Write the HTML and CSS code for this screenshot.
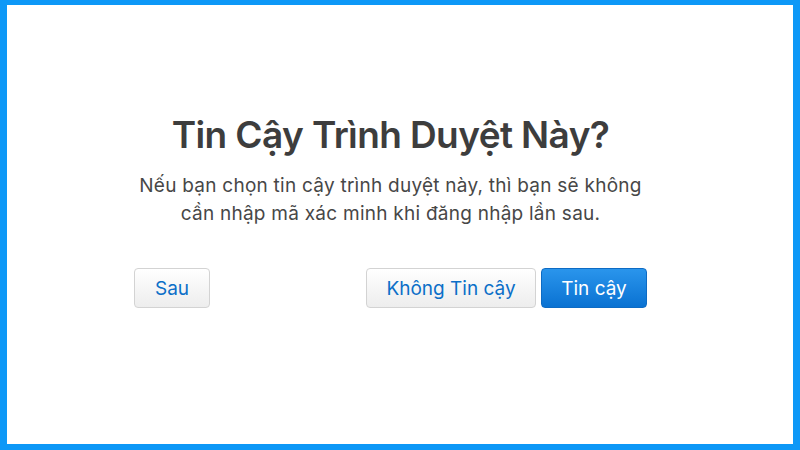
FILE: index.html
```html
<!DOCTYPE html>
<html lang="vi">
<head>
<meta charset="utf-8">
<link rel="stylesheet" href="styles.css">
</head>
<body>
<div class="frame">
  <div class="dialog">
    <h1 class="title">Tin Cậy Trình Duyệt Này?</h1>
    <p class="desc">Nếu bạn chọn tin cậy trình duyệt này, thì bạn sẽ không<br>cần nhập mã xác minh khi đăng nhập lần sau.</p>
    <div class="actions">
      <button class="btn btn-later">Sau</button>
      <div class="right">
        <button class="btn btn-no">Không Tin cậy</button>
        <button class="btn btn-primary">Tin cậy</button>
      </div>
    </div>
  </div>
</div>
</body>
</html>
```
FILE: styles.css
```css
html, body {
  margin: 0;
  padding: 0;
  background: #fff;
}
.frame {
  box-sizing: border-box;
  width: 800px;
  height: 450px;
  border-style: solid;
  border-color: #0d98f7;
  border-width: 5px 7px 6px 7px;
  background: #fff;
  font-family: Inter, "Noto Sans", sans-serif;
}
.dialog {
  width: 513px;
  margin-left: 127px;
  padding-top: 107px;
  text-align: center;
}
.title {
  margin: 0;
  font-size: 37px;
  line-height: 46px;
  font-weight: 600;
  color: #3d3d3d;
  letter-spacing: -0.6px;
}
.desc {
  margin: 14px -30px 0;
  font-size: 19px;
  line-height: 28px;
  color: #474747;
  font-weight: 400;
  letter-spacing: 0.25px;
}
.actions {
  margin-top: 40px;
  display: flex;
  justify-content: space-between;
  align-items: center;
}
.right {
  display: flex;
  gap: 5px;
}
.btn {
  box-sizing: border-box;
  height: 40px;
  padding: 0;
  font-family: Inter, "Noto Sans", sans-serif;
  font-size: 19px;
  border-radius: 4px;
  cursor: pointer;
}
.btn-later, .btn-no {
  color: #0b6fc8;
  background: linear-gradient(#ffffff, #ededed);
  border: 1px solid #d3d3d3;
}
.btn-later { width: 76px; }
.btn-no { width: 170px; }
.btn-primary {
  width: 106px;
  color: #fff;
  background: linear-gradient(#2a95ec, #0a72d2);
  border: 1px solid #0d6bc4;
}
```
